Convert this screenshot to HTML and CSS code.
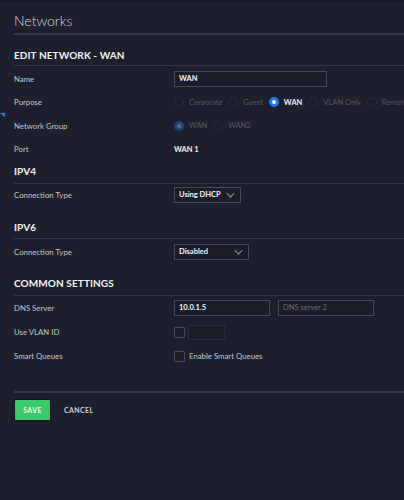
FILE: index.html
```html
<!DOCTYPE html>
<html>
<head>
<meta charset="utf-8">
<link rel="stylesheet" href="styles.css">
</head>
<body>
<div class="topstrip"></div>
<span class="edge-arrow"></span>
<div class="page">
  <div class="title">Networks</div>

  <div class="heading h-edit">EDIT NETWORK - WAN</div>
  <div class="rows rows-edit">
    <div class="row">
      <div class="label">Name</div>
      <div class="field"><div class="input name-input">WAN</div></div>
    </div>
    <div class="row">
      <div class="label">Purpose</div>
      <div class="field radios">
        <span class="radio"><span class="dot"></span><span class="rtext">Corporate</span></span>
        <span class="radio"><span class="dot"></span><span class="rtext">Guest</span></span>
        <span class="radio on"><span class="dot"></span><span class="rtext">WAN</span></span>
        <span class="radio"><span class="dot"></span><span class="rtext">VLAN Only</span></span>
        <span class="radio"><span class="dot"></span><span class="rtext">Remote</span></span>
      </div>
    </div>
    <div class="row">
      <div class="label">Network Group</div>
      <div class="field radios">
        <span class="radio dis-on"><span class="dot"></span><span class="rtext">WAN</span></span>
        <span class="radio"><span class="dot"></span><span class="rtext">WAN2</span></span>
      </div>
    </div>
    <div class="row">
      <div class="label">Port</div>
      <div class="field value">WAN 1</div>
    </div>
  </div>

  <div class="heading h-ipv4">IPV4</div>
  <div class="row row-ct4">
    <div class="label">Connection Type</div>
    <div class="field"><div class="select sel-dhcp">Using DHCP<span class="chev"></span></div></div>
  </div>

  <div class="heading h-ipv6">IPV6</div>
  <div class="row row-ct6">
    <div class="label">Connection Type</div>
    <div class="field"><div class="select sel-dis">Disabled<span class="chev"></span></div></div>
  </div>

  <div class="heading h-common">COMMON SETTINGS</div>
  <div class="rows">
    <div class="row">
      <div class="label">DNS Server</div>
      <div class="field dns">
        <div class="input dns-input">10.0.1.5</div>
        <div class="input dns-input placeholder">DNS server 2</div>
      </div>
    </div>
    <div class="row">
      <div class="label">Use VLAN ID</div>
      <div class="field vlan">
        <span class="check"></span>
        <div class="input vlan-input"></div>
      </div>
    </div>
    <div class="row">
      <div class="label">Smart Queues</div>
      <div class="field sq">
        <span class="check"></span>
        <span class="sqtext">Enable Smart Queues</span>
      </div>
    </div>
  </div>

  <div class="footer">
    <button class="btn save">SAVE</button>
    <button class="btn cancel">CANCEL</button>
  </div>
</div>
</body>
</html>
```
FILE: styles.css
```css
html, body {
  margin: 0;
  padding: 0;
  background: #1d1f2c;
  font-family: Lato, "Liberation Sans", sans-serif;
  color: #c4c7d0;
  width: 404px;
  height: 500px;
  overflow: hidden;
}
.topstrip {
  height: 2px;
  background: #161822;
}
.edge-arrow {
  position: absolute;
  left: 0;
  top: 113px;
  width: 0;
  height: 0;
  border-top: 4px solid #2f7ee0;
  border-left: 5px solid transparent;
}
.page {
  padding-left: 14px;
}
.title {
  font-size: 14px;
  font-weight: 300;
  color: #d5d8e0;
  line-height: 20px;
  padding-top: 9px;
  height: 22px;
  border-bottom: 2px solid #363949;
}
.heading {
  font-size: 10px;
  font-weight: 700;
  color: #f2f3f6;
  line-height: 16px;
  letter-spacing: 0.1px;
  border-bottom: 1px solid #353848;
}
.h-edit { padding-top: 12px; padding-bottom: 2px; }
.h-ipv4 { padding-top: 2px; padding-bottom: 4px; }
.h-ipv6 { padding-top: 13px; padding-bottom: 3px; }
.h-common { padding-top: 10px; padding-bottom: 4px; }

.rows-edit { padding-top: 1px; }
.rows-edit .row { height: 23.5px; }
.row {
  display: flex;
  align-items: center;
  height: 24px;
  white-space: nowrap;
}
.row-ct4 { height: 22px; }
.row-ct6 { height: 26px; }
.label {
  width: 160px;
  flex: none;
  font-size: 7.8px;
  font-weight: 400;
  color: #c3c6cf;
}
.field {
  display: flex;
  align-items: center;
  font-size: 7.5px;
  flex: none;
}
.input {
  box-sizing: border-box;
  height: 16px;
  border: 1px solid #474a59;
  background: #1b1d29;
  color: #f2f3f6;
  font-weight: 700;
  font-size: 7.5px;
  line-height: 14px;
  padding-left: 4px;
}
.name-input { width: 153px; }
.dns { gap: 8px; }
.dns-input { width: 96px; }
.placeholder { color: #6b6e7c; font-weight: 400; }
.radio {
  display: flex;
  align-items: center;
  margin-right: 6px;
  flex: none;
}
.radio .dot {
  box-sizing: border-box;
  width: 10px;
  height: 10px;
  border-radius: 50%;
  border: 1px solid #2c2e3c;
  margin-right: 5px;
}
.radio .rtext { color: #575a69; font-size: 7.5px; }
.radio.on .dot {
  border: 3px solid #1f7bf0;
  background: #ffffff;
}
.radio.on .rtext { color: #f2f3f6; font-weight: 700; }
.radio.dis-on .dot {
  border: 3px solid #234577;
  background: #4d6d9c;
}
.value { color: #f2f3f6; font-weight: 700; }
.select {
  box-sizing: border-box;
  height: 16px;
  border: 1px solid #474a59;
  background: #1b1d29;
  color: #f2f3f6;
  font-weight: 700;
  font-size: 7.5px;
  line-height: 14px;
  padding-left: 4px;
  padding-right: 7px;
  display: flex;
  align-items: center;
  justify-content: space-between;
}
.sel-dhcp { width: 67px; }
.sel-dis { width: 75px; }
.chev {
  width: 4px;
  height: 4px;
  border-right: 1px solid #8a8d9a;
  border-bottom: 1px solid #8a8d9a;
  transform: rotate(45deg) scale(1.2, 1.2);
  margin-top: -3px;
}
.check {
  box-sizing: border-box;
  width: 11px;
  height: 11px;
  border: 1px solid #4a4d5c;
  border-radius: 1px;
  display: inline-block;
}
.vlan { gap: 3px; }
.vlan-input { width: 37px; height: 15px; border-color: #2a2c3a; }
.sq { gap: 4px; }
.sqtext { color: #c3c6cf; font-size: 7.8px; }
.footer {
  margin-top: 23px;
  border-top: 2px solid #363949;
  padding-top: 6px;
  display: flex;
  align-items: center;
}
.btn {
  font-family: Lato, "Liberation Sans", sans-serif;
  font-weight: 700;
  font-size: 7px;
  letter-spacing: 0.4px;
  cursor: pointer;
}
.save {
  width: 37px;
  height: 22px;
  background: #39cb67;
  color: #eafff0;
  border: 1px solid #14151d;
  border-radius: 2px;
  padding: 0;
}
.cancel {
  background: none;
  border: none;
  color: #d0d3dc;
  margin-left: 13px;
  padding: 0;
}
```
